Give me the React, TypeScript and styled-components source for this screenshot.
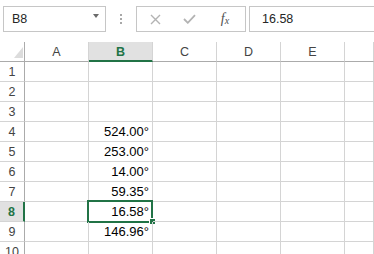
import React from "react";
import styled, { createGlobalStyle } from "styled-components";

const Global = createGlobalStyle`
  html, body { margin: 0; padding: 0; background: #fff; overflow: hidden; }
  body { font-family: "Liberation Sans", Arial, sans-serif; }
`;

const Page = styled.div`
  width: 374px;
  height: 254px;
  overflow: hidden;
  background: #fff;
`;

const Toolbar = styled.div`
  height: 42px;
  display: flex;
  align-items: flex-start;
  padding: 6px 0 0 3px;
  box-sizing: border-box;
`;

const Box = styled.div<{ $w?: number; $grow?: boolean }>`
  height: 26px;
  box-sizing: border-box;
  border: 1px solid #c6c6c6;
  background: #fff;
  display: flex;
  align-items: center;
  ${(p) => (p.$w ? `width: ${p.$w}px;` : "")}
  ${(p) => (p.$grow ? "flex: 1; margin-right: -4px;" : "")}
`;

const BoxText = styled.span`
  font-family: "Liberation Sans", Arial, sans-serif;
  font-size: 12.5px;
  color: #262626;
  padding-left: 8px;
  flex: 1;
`;

const Arrow = styled.span`
  width: 0;
  height: 0;
  border-left: 3.5px solid transparent;
  border-right: 3.5px solid transparent;
  border-top: 4px solid #6a6a6a;
  margin-right: 6px;
  margin-top: -6px;
`;

const Dots = styled.div`
  width: 30px;
  height: 26px;
  display: flex;
  flex-direction: column;
  align-items: center;
  justify-content: center;
  gap: 2px;
  & > i {
    display: block;
    width: 2px;
    height: 2px;
    background: #a8a8a8;
  }
`;

const IconSlot = styled.div<{ $w: number }>`
  width: ${(p) => p.$w}px;
  height: 24px;
  display: flex;
  align-items: center;
  justify-content: center;
`;

const Fx = styled.span`
  font-family: "Liberation Serif", "Times New Roman", serif;
  font-style: italic;
  font-size: 14px;
  color: #505050;
  & sub {
    font-size: 10px;
    vertical-align: baseline;
    position: relative;
    top: 1px;
  }
`;

const Gap = styled.div<{ $w: number }>`
  width: ${(p) => p.$w}px;
  flex: none;
`;

const Grid = styled.div`
  display: grid;
  grid-template-columns: 25px repeat(5, 64px) 1fr;
  grid-auto-rows: 20px;
`;

const Corner = styled.div`
  box-sizing: border-box;
  border-right: 1px solid #ababab;
  border-bottom: 1px solid #ababab;
  position: relative;
  &::after {
    content: "";
    position: absolute;
    right: 1px;
    bottom: 3px;
    width: 0;
    height: 0;
    border-left: 9px solid transparent;
    border-bottom: 11px solid #dcdcdc;
  }
`;

const ColHead = styled.div<{ $sel?: boolean }>`
  box-sizing: border-box;
  border-right: 1px solid #d4d4d4;
  border-bottom: ${(p) => (p.$sel ? "2px solid #217346" : "1px solid #ababab")};
  background: ${(p) => (p.$sel ? "#e1e1e1" : "#fff")};
  color: ${(p) => (p.$sel ? "#217346" : "#444")};
  font-weight: ${(p) => (p.$sel ? 700 : 400)};
  font-size: 12.5px;
  display: flex;
  align-items: center;
  justify-content: center;
  padding-top: ${(p) => (p.$sel ? 1 : 0)}px;
`;

const RowHead = styled.div<{ $sel?: boolean }>`
  box-sizing: border-box;
  border-right: ${(p) => (p.$sel ? "2px solid #217346" : "1px solid #ababab")};
  border-bottom: 1px solid #d4d4d4;
  background: ${(p) => (p.$sel ? "#e1e1e1" : "#fff")};
  color: ${(p) => (p.$sel ? "#217346" : "#444")};
  font-weight: ${(p) => (p.$sel ? 700 : 400)};
  font-size: 12.5px;
  display: flex;
  align-items: center;
  justify-content: center;
`;

const Cell = styled.div<{ $sel?: boolean }>`
  box-sizing: border-box;
  border-right: 1px solid #d4d4d4;
  border-bottom: 1px solid #d4d4d4;
  font-size: 13px;
  color: #000;
  display: flex;
  align-items: center;
  justify-content: flex-end;
  padding-right: 3px;
  position: relative;
  ${(p) =>
    p.$sel
      ? `
    &::before {
      content: "";
      position: absolute;
      left: -2px; top: -2px; right: -1px; bottom: -2px;
      border: 2px solid #217346;
      pointer-events: none;
    }
    &::after {
      content: "";
      position: absolute;
      right: -4px; bottom: -4px;
      width: 5px; height: 5px;
      background: #217346;
      border: 1px solid #fff;
    }
  `
      : ""}
`;

const cols = ["A", "B", "C", "D", "E", ""];
const values: Record<number, string> = {
  4: "524.00°",
  5: "253.00°",
  6: "14.00°",
  7: "59.35°",
  8: "16.58°",
  9: "146.96°",
};

export default function App() {
  const rows = Array.from({ length: 10 }, (_, i) => i + 1);
  return (
    <Page>
      <Global />
      <Toolbar>
        <Box $w={103}>
          <BoxText>B8</BoxText>
          <Arrow />
        </Box>
        <Dots>
          <i />
          <i />
          <i />
        </Dots>
        <Box $w={110}>
          <IconSlot $w={36}>
            <svg width="11" height="11" viewBox="0 0 11 11">
              <path d="M1 1 L10 10 M10 1 L1 10" stroke="#b3b3b3" strokeWidth="1.4" fill="none" />
            </svg>
          </IconSlot>
          <IconSlot $w={32}>
            <svg width="13" height="10" viewBox="0 0 13 10">
              <path d="M1 5 L4.8 8.8 L12 1.2" stroke="#b3b3b3" strokeWidth="1.8" fill="none" />
            </svg>
          </IconSlot>
          <IconSlot $w={40}>
            <Fx>
              f<sub>x</sub>
            </Fx>
          </IconSlot>
        </Box>
        <Gap $w={3} />
        <Box $grow>
          <BoxText style={{ paddingLeft: 12 }}>16.58</BoxText>
        </Box>
      </Toolbar>
      <Grid>
        <Corner />
        {cols.map((c, i) => (
          <ColHead key={i} $sel={c === "B"}>
            {c}
          </ColHead>
        ))}
        {rows.map((r) => (
          <React.Fragment key={r}>
            <RowHead $sel={r === 8}>{r}</RowHead>
            {cols.map((c, i) => (
              <Cell key={i} $sel={r === 8 && c === "B"}>
                {c === "B" ? values[r] ?? "" : ""}
              </Cell>
            ))}
          </React.Fragment>
        ))}
      </Grid>
    </Page>
  );
}
